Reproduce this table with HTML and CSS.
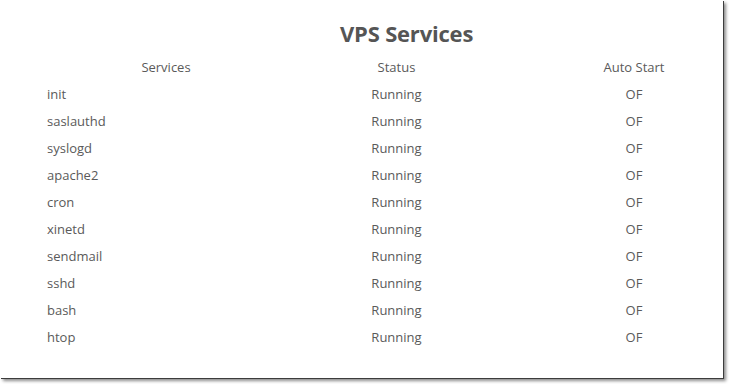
FILE: index.html
```html
<!DOCTYPE html>
<html>
<head>
<meta charset="utf-8">
<link rel="stylesheet" href="styles.css">
</head>
<body>
<div class="frame">
  <h1 class="title">VPS Services</h1>
  <table class="services">
    <thead>
      <tr><th class="c1">Services</th><th class="c2">Status</th><th class="c3">Auto Start</th></tr>
    </thead>
    <tbody>
      <tr><td class="c1">init</td><td class="c2">Running</td><td class="c3">OF</td></tr>
      <tr><td class="c1">saslauthd</td><td class="c2">Running</td><td class="c3">OF</td></tr>
      <tr><td class="c1">syslogd</td><td class="c2">Running</td><td class="c3">OF</td></tr>
      <tr><td class="c1">apache2</td><td class="c2">Running</td><td class="c3">OF</td></tr>
      <tr><td class="c1">cron</td><td class="c2">Running</td><td class="c3">OF</td></tr>
      <tr><td class="c1">xinetd</td><td class="c2">Running</td><td class="c3">OF</td></tr>
      <tr><td class="c1">sendmail</td><td class="c2">Running</td><td class="c3">OF</td></tr>
      <tr><td class="c1">sshd</td><td class="c2">Running</td><td class="c3">OF</td></tr>
      <tr><td class="c1">bash</td><td class="c2">Running</td><td class="c3">OF</td></tr>
      <tr><td class="c1">htop</td><td class="c2">Running</td><td class="c3">OF</td></tr>
    </tbody>
  </table>
</div>
</body>
</html>
```
FILE: styles.css
```css
html, body {
  margin: 0;
  padding: 0;
  background: #ffffff;
}
body {
  width: 729px;
  height: 384px;
  overflow: hidden;
  font-family: "Open Sans", "Noto Sans", sans-serif;
  color: #5a5a5a;
}
.frame {
  box-sizing: border-box;
  width: 723px;
  height: 378px;
  background: #fff;
  box-shadow: 1px 1px 0 #3c3c3c, 3px 3px 3px rgba(0, 0, 0, 0.45);
  padding-top: 18px;
}
.title {
  margin: 0;
  padding-left: 340px;
  font-size: 22px;
  font-weight: 700;
  line-height: 30px;
  color: #555;
  letter-spacing: -0.2px;
}
.services {
  border-collapse: collapse;
  table-layout: fixed;
  margin-left: 47px;
  margin-top: 6px;
  font-size: 13px;
}
.services th, .services td {
  padding: 0;
  height: 27px;
  font-weight: 400;
  line-height: 27px;
  white-space: nowrap;
}
.c1 { width: 238px; text-align: left; }
.services th.c1 { text-align: center; }
.c2 { width: 223px; text-align: center; }
.c3 { width: 148px; padding-left: 52px !important; text-align: center; }
```
